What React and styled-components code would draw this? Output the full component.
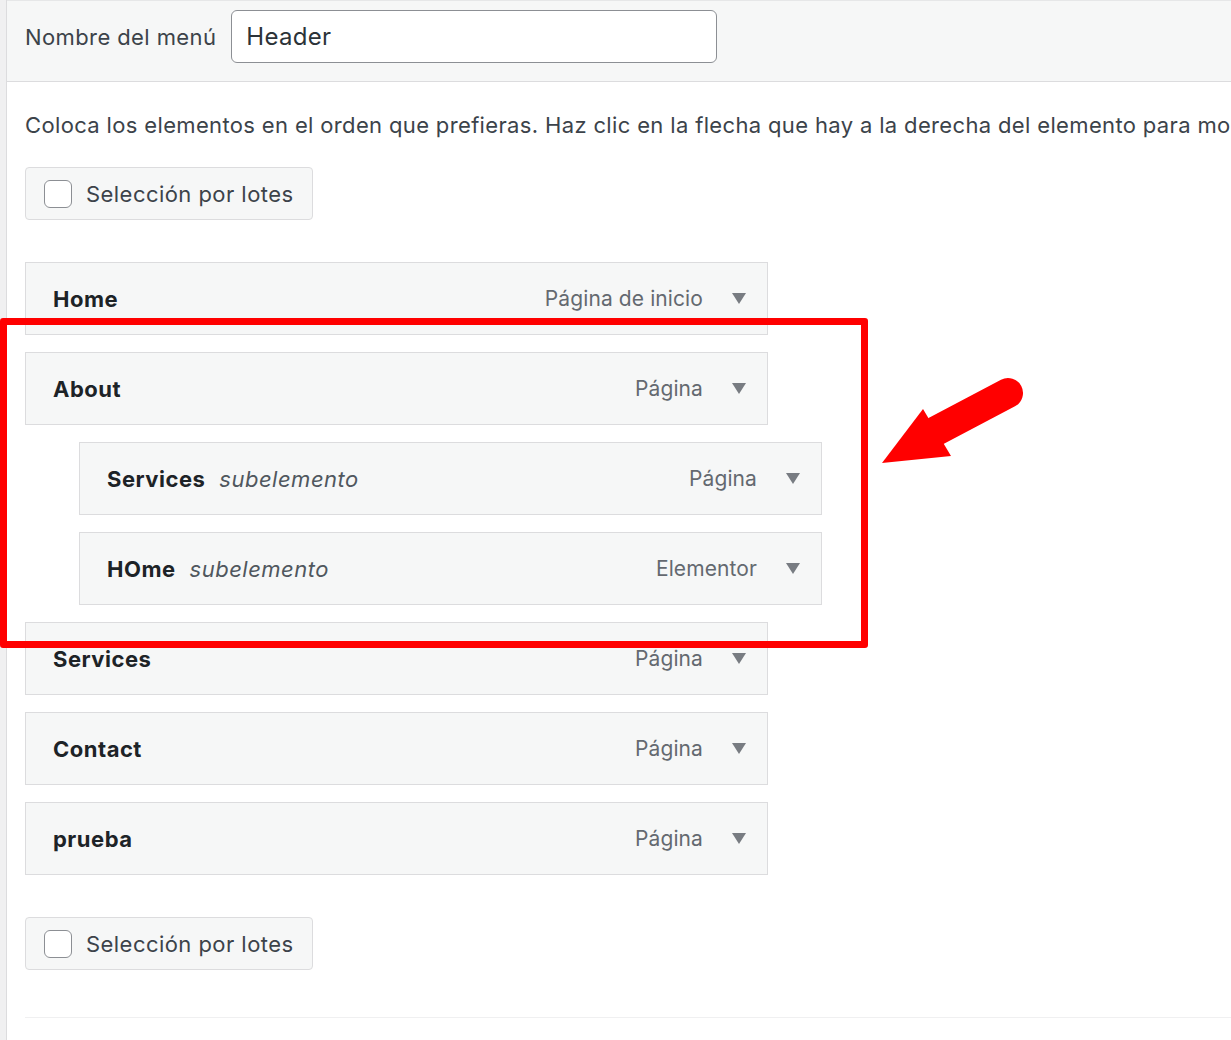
import React from "react";
import styled, { createGlobalStyle } from "styled-components";

const Global = createGlobalStyle`
  html, body { margin: 0; padding: 0; background: #fff; }
  body { font-family: Inter, "Noto Sans", "Liberation Sans", sans-serif; overflow: hidden; }
  * { box-sizing: border-box; }
`;

const Page = styled.div`
  position: relative;
  display: flex;
  width: 1231px;
  height: 1040px;
  overflow: hidden;
`;

const SideStrip = styled.div`
  width: 7px;
  flex: none;
  background: #f0f0f1;
  border-right: 1px solid #dcdcde;
`;

const Main = styled.div`
  flex: 1;
  display: flex;
  flex-direction: column;
  min-width: 0;
`;

const HeaderBar = styled.div`
  height: 82px;
  display: flex;
  align-items: flex-start;
  gap: 15px;
  padding: 9px 0 0 18px;
  background: #f6f7f7;
  border-top: 1px solid #e6e7e8;
  border-bottom: 1px solid #dcdcde;
`;

const Label = styled.label`
  height: 53px;
  display: flex;
  align-items: center;
  font-size: 22px;
  letter-spacing: 0.4px;
  color: #3c434a;
`;

const NameInput = styled.div`
  width: 486px;
  height: 53px;
  border: 1px solid #8c8f94;
  border-radius: 6px;
  background: #fff;
  display: flex;
  align-items: center;
  padding-left: 14px;
  font-size: 24px;
  letter-spacing: 0.3px;
  color: #2c3338;
`;

const Body = styled.div`
  padding: 28px 0 0 18px;
  display: flex;
  flex-direction: column;
  flex: 1;
`;

const Description = styled.p`
  margin: 0;
  font-size: 22px;
  letter-spacing: 0.35px;
  line-height: 30px;
  color: #3c434a;
  white-space: nowrap;
`;

const BulkButton = styled.div`
  width: 288px;
  height: 53px;
  margin-top: ${(p) => p.$top}px;
  display: flex;
  align-items: center;
  gap: 14px;
  padding-left: 18px;
  background: #f6f7f7;
  border: 1px solid #dcdcde;
  border-radius: 4px;
  font-size: 22px;
  letter-spacing: 0.45px;
  color: #3c434a;
`;

const Checkbox = styled.span`
  width: 28px;
  height: 28px;
  border: 1px solid #8c8f94;
  border-radius: 6px;
  background: #fff;
  flex: none;
`;

const MenuList = styled.div`
  margin-top: 42px;
  display: flex;
  flex-direction: column;
  gap: 17px;
`;

const Item = styled.div`
  width: 743px;
  height: 73px;
  margin-left: ${(p) => (p.$depth ? 54 : 0)}px;
  display: flex;
  align-items: center;
  padding: 0 21px 0 27px;
  background: #f6f7f7;
  border: 1px solid #dcdcde;
`;

const Title = styled.span`
  font-size: 22px;
  font-weight: 700;
  letter-spacing: 0.5px;
  color: #1d2327;
`;

const Sub = styled.span`
  margin-left: 14px;
  font-size: 22px;
  letter-spacing: 0.5px;
  font-style: italic;
  color: #50575e;
`;

const Type = styled.span`
  margin-left: auto;
  font-size: 21px;
  letter-spacing: 0.1px;
  color: #646970;
`;

const Caret = styled.span`
  margin-left: 29px;
  width: 0;
  height: 0;
  border-left: 7px solid transparent;
  border-right: 7px solid transparent;
  border-top: 11px solid #787c82;
`;

const Separator = styled.div`
  margin-top: 47px;
  height: 1px;
  background: #f0f0f1;
`;

const Highlight = styled.div`
  position: absolute;
  left: 0;
  top: 318px;
  width: 868px;
  height: 330px;
  border: 7px solid #ff0000;
  border-radius: 3px;
  pointer-events: none;
`;

const ArrowSvg = styled.svg`
  position: absolute;
  left: 870px;
  top: 365px;
  pointer-events: none;
`;

const items = [
  { title: "Home", type: "Página de inicio" },
  { title: "About", type: "Página" },
  { title: "Services", type: "Página", sub: true },
  { title: "HOme", type: "Elementor", sub: true },
  { title: "Services", type: "Página" },
  { title: "Contact", type: "Página" },
  { title: "prueba", type: "Página" },
];

export default function App() {
  return (
    <>
      <Global />
      <Page>
        <SideStrip />
        <Main>
          <HeaderBar>
            <Label>Nombre del menú</Label>
            <NameInput>Header</NameInput>
          </HeaderBar>
          <Body>
            <Description>
              Coloca los elementos en el orden que prefieras. Haz clic en la flecha que hay a la derecha del elemento para mostrar más opciones de configuración.
            </Description>
            <BulkButton $top={27}>
              <Checkbox />
              Selección por lotes
            </BulkButton>
            <MenuList>
              {items.map((it, i) => (
                <Item key={i} $depth={it.sub}>
                  <Title>{it.title}</Title>
                  {it.sub && <Sub>subelemento</Sub>}
                  <Type>{it.type}</Type>
                  <Caret />
                </Item>
              ))}
            </MenuList>
            <BulkButton $top={42}>
              <Checkbox />
              Selección por lotes
            </BulkButton>
            <Separator />
          </Body>
        </Main>
        <Highlight />
        <ArrowSvg width="170" height="110" viewBox="870 365 170 110">
          <line x1="1008" y1="393" x2="936" y2="431" stroke="#ff0000" strokeWidth="30" strokeLinecap="round" />
          <polygon points="882,463 923,409 951,456" fill="#ff0000" />
        </ArrowSvg>
      </Page>
    </>
  );
}
